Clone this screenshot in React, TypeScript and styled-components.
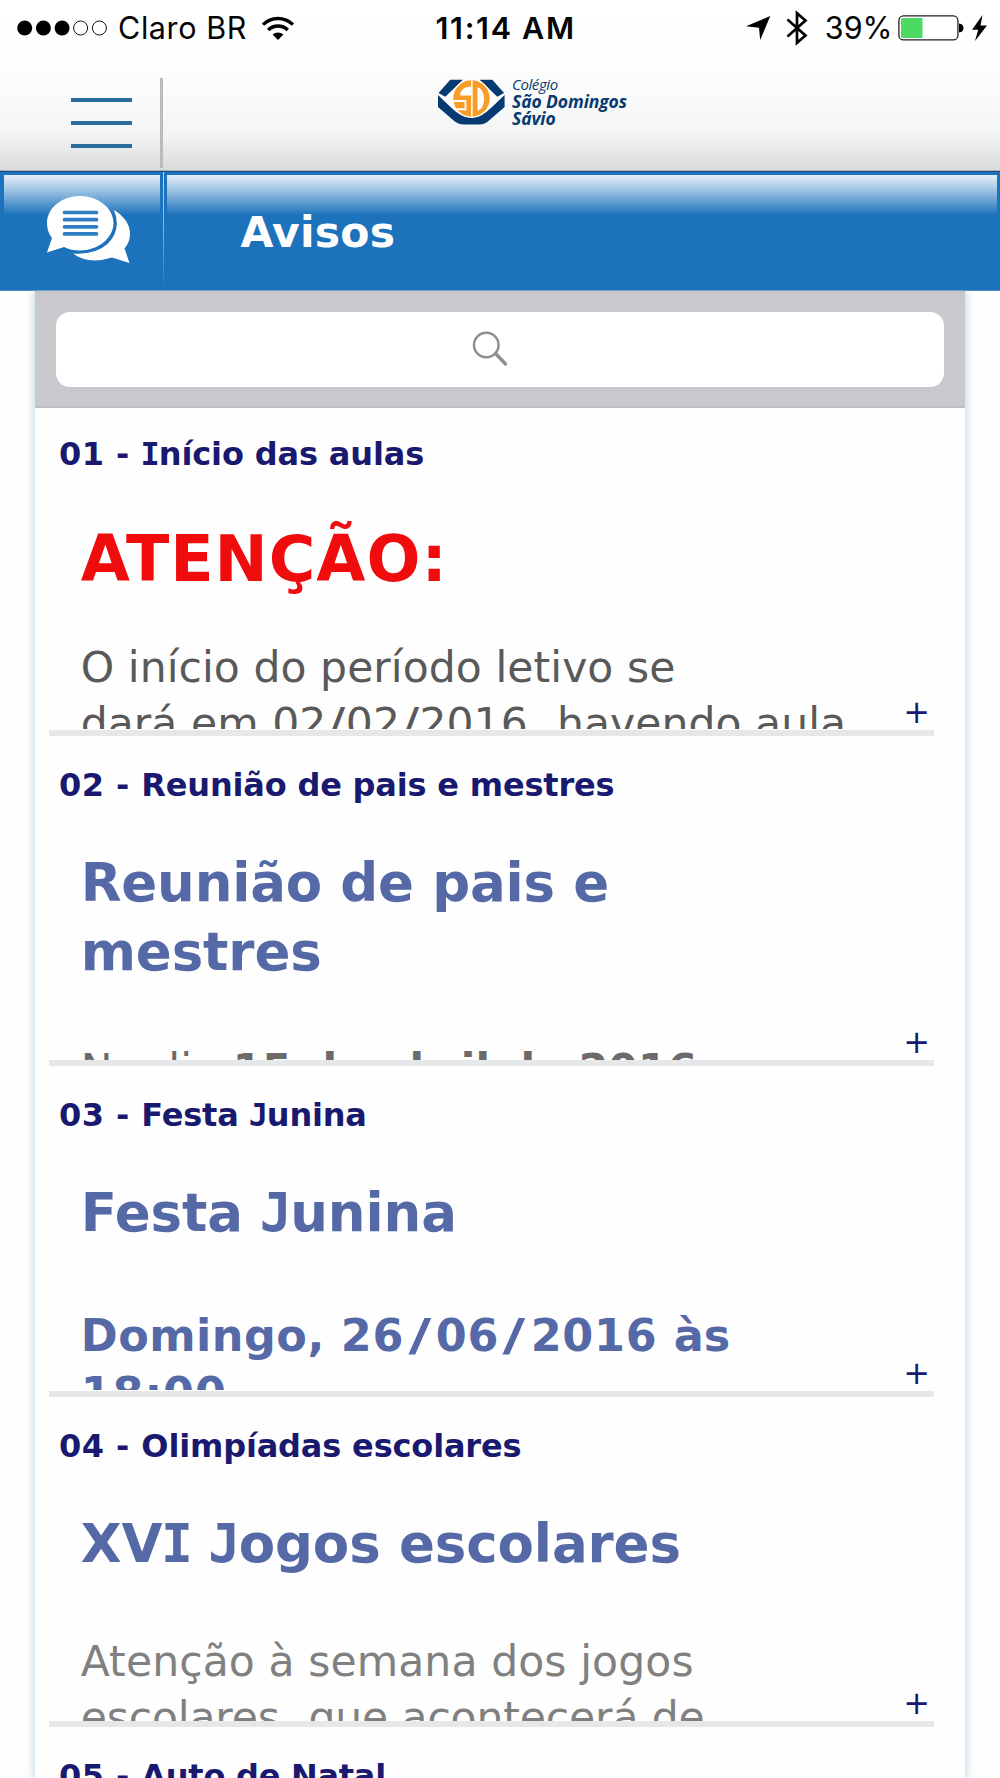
import React from "react";
import styled, { createGlobalStyle } from "styled-components";

const Global = createGlobalStyle`
  * { box-sizing: border-box; }
  html, body { margin: 0; padding: 0; background: #fefefe; }
  body { overflow: hidden; }
`;

const Screen = styled.div`
  width: 1000px;
  height: 1778px;
  overflow: hidden;
  display: flex;
  flex-direction: column;
  background: #fefefe;
  font-family: Verdana, "DejaVu Sans", sans-serif;
`;

const Top = styled.header`
  flex: none;
  height: 171px;
  display: flex;
  flex-direction: column;
  background: linear-gradient(#fff 0, #fefefe 62px, #f4f5f5 132px, #e6e7e7 152px, #d9dbdd 170px);
  border-bottom: 1px solid #a9b0b6;
`;

const StatusBar = styled.div`
  height: 56px;
  display: grid;
  grid-template-columns: 418.5px 1fr auto;
  align-items: center;
  padding: 0 13px 0 17px;
  font-family: Inter, sans-serif;
  font-size: 30.5px;
  line-height: 54px;
  color: #050505;
`;

const Cluster = styled.div`
  display: flex;
  align-items: center;
  height: 56px;
`;

const Label = styled.span<{ $track?: number; $weight?: number }>`
  letter-spacing: ${(p) => p.$track ?? 0}px;
  font-weight: ${(p) => p.$weight ?? 400};
  white-space: nowrap;
`;

const Carrier = styled(Label)`
  margin: 0 14px 0 10px;
`;

const BluetoothIcon = styled.svg`
  margin: 0 16.5px 0 15px;
`;

const BatteryIcon = styled.svg`
  margin: 0 8px 0 5.5px;
`;

const BrandRow = styled.div`
  flex: 1;
  display: flex;
  align-items: flex-start;
`;

const MenuCell = styled.div`
  width: 163px;
  height: 90px;
  margin-top: 22px;
  padding: 20px 0 0 71px;
  border-right: 3px solid #b9bbbc;
  display: flex;
  flex-direction: column;
  gap: 19px;
`;

const MenuLine = styled.span`
  width: 61px;
  height: 4px;
  background: #286d9e;
`;

const Brand = styled.div`
  display: flex;
  margin: 23px 0 0 274.5px;
`;

const BrandName = styled.div`
  padding-left: 7.5px;
  margin-top: -3.5px;
  font-family: "Open Sans", sans-serif;
  font-style: italic;
  font-weight: 700;
  font-size: 17.5px;
  line-height: 17px;
  letter-spacing: -0.1px;
  color: #073a70;
  white-space: nowrap;
`;

const BrandKind = styled.div`
  font-weight: 400;
  font-size: 15px;
  line-height: 17px;
  letter-spacing: -0.4px;
`;

const TitleBar = styled.div`
  flex: none;
  height: 119.5px;
  display: flex;
  gap: 3px;
  background: #1d73bb;
  border-top: 1px solid #1a4c80;
  border-bottom: 1px solid #4d90c8;
`;

const Gloss = styled.div<{ $w?: number }>`
  ${(p) => (p.$w ? `width: ${p.$w}px; flex: none;` : "flex: 1; margin-right: 3px;")}
  margin-top: 3px;
  height: 115px;
  background: linear-gradient(#e4eff8 0, #a9cae5 13px, #5a9ad0 28px, #1d73bb 40px);
  display: flex;
`;

const BarDivider = styled.span`
  width: 1px;
  flex: none;
  height: 117px;
  background: linear-gradient(#c4dcef 0, #6ea6d4 70px, #1d73bb 116px);
`;

const BarEdge = styled.span`
  width: 1px;
  flex: none;
`;

const ChatIcon = styled.svg`
  margin: 20px 0 0 42px;
`;

const PageTitle = styled.h1`
  margin: 0 0 0 73.5px;
  padding-top: 29.5px;
  font-size: 42.5px;
  line-height: 56px;
  letter-spacing: 0.2px;
  font-weight: 700;
  color: #fff;
`;

const Panel = styled.main`
  width: 930px;
  margin: 0 auto;
  flex: 1;
  min-height: 0;
  background: #fefefe;
  box-shadow: 0 0 9px 1px #c3d6e3;
  clip-path: inset(0 -20px);
`;

const SearchBar = styled.div`
  height: 117.5px;
  padding: 21.5px 21px 19px;
  background: #c9c8cd;
  border-bottom: 2px solid #bfbebf;
`;

const SearchField = styled.div`
  height: 75px;
  border-radius: 14px;
  background: #fff;
  display: flex;
  padding: 19px 0 0 416px;
`;

const List = styled.div`
  margin-top: -2.8px;
`;

const Item = styled.article`
  width: 885px;
  height: 330.5px;
  margin-left: 14.3px;
  padding-top: 29px;
  border-bottom: 6.5px solid #e6e7e9;
  overflow: hidden;
`;

const ItemTitle = styled.h2<{ $track: number }>`
  margin: 0;
  padding-left: 9.7px;
  font-size: 32px;
  line-height: 40px;
  height: 40px;
  letter-spacing: ${(p) => p.$track}px;
  font-weight: 700;
  color: #191970;
  white-space: nowrap;
`;

const ItemNumber = styled.span`
  letter-spacing: 0.45px;
`;

const ItemBody = styled.div`
  height: 255px;
  display: flex;
  justify-content: space-between;
  align-items: flex-end;
`;

const Preview = styled.div`
  height: 255px;
  padding-left: 31.4px;
  overflow: hidden;
`;

const Line = styled.div<{ $size: number; $lh: number; $mt?: number; $color: string; $bold?: boolean; $track?: number }>`
  font-size: ${(p) => p.$size}px;
  line-height: ${(p) => p.$lh}px;
  height: ${(p) => p.$lh}px;
  margin-top: ${(p) => p.$mt ?? 0}px;
  color: ${(p) => p.$color};
  font-weight: ${(p) => (p.$bold ? 700 : 400)};
  letter-spacing: ${(p) => p.$track ?? 0}px;
  white-space: nowrap;
`;

/* Widens the side bearings of narrow glyphs, in em. */
const Wide = styled.span<{ $l: number; $r: number; $stretch?: number }>`
  margin-left: ${(p) => p.$l}em;
  margin-right: ${(p) => p.$r}em;
  ${(p) => (p.$stretch ? `display: inline-block; line-height: 1; transform: scaleX(${p.$stretch});` : "")}
`;

/* Capitals I and J with slab serifs. */
const Slab = styled.span`
  font-family: "DejaVu Sans Mono", monospace;
  line-height: 1;
  margin: 0 -0.027em;
`;

const Track = styled.span<{ $by: number }>`
  letter-spacing: ${(p) => p.$by}px;
`;

const Expand = styled.span`
  flex: none;
  width: 31px;
  font-size: 32px;
  line-height: 40px;
  margin-bottom: -2.4px;
  color: #191970;
`;

const spaced = (text: string, bold = true) =>
  text.split(/([JI/,])/).map((part, i) => {
    if (part === "/") {
      const side = bold ? 0.162 : 0.0585;
      return <Wide key={i} $l={side} $r={side} $stretch={bold ? 1.4 : 1.25}>/</Wide>;
    }
    if (part === "," && !bold) return <Wide key={i} $l={0} $r={0.046}>,</Wide>;
    if (bold && (part === "I" || part === "J")) return <Slab key={i}>{part}</Slab>;
    return part;
  });

type TextLine = { text: React.ReactNode; size: number; lh: number; mt?: number; color: string; bold?: boolean; track?: number };
type Notice = { number: string; title: string; track: number; lines: TextLine[] };

const BLUE = "#5669a7";

const notices: Notice[] = [
  {
    number: "01",
    title: "Início das aulas",
    track: -0.14,
    lines: [
      { text: "ATENÇÃO:", size: 63.5, lh: 78, mt: 46, color: "#f00c0c", bold: true, track: 1 },
      { text: "O início do período letivo se", size: 42.5, lh: 56, mt: 41.6, color: "#595959", track: 0.06 },
      { text: spaced("dará em 02/02/2016, havendo aula", false), size: 42.5, lh: 56, color: "#595959", track: 0.06 },
    ],
  },
  {
    number: "02",
    title: "Reunião de pais e mestres",
    track: -0.19,
    lines: [
      { text: "Reunião de pais e", size: 53, lh: 69, mt: 43.2, color: BLUE, bold: true, track: -0.17 },
      { text: "mestres", size: 53, lh: 69, color: BLUE, bold: true, track: -0.1 },
      { text: <><Track $by={0.35}>No dia </Track><b>15 de abril de 2016</b></>, size: 42.5, lh: 56, mt: 56.1, color: "#6b6b6b" },
    ],
  },
  {
    number: "03",
    title: "Festa Junina",
    track: -0.2,
    lines: [
      { text: spaced("Festa Junina"), size: 53, lh: 69, mt: 43, color: BLUE, bold: true, track: -0.1 },
      {
        text: <><Track $by={0.5}>Domingo, </Track><Track $by={0.77}>{spaced("26/06/2016 ")}</Track>às</>,
        size: 44.5, lh: 58.5, mt: 59.4, color: BLUE, bold: true,
      },
      { text: "18:00", size: 44.5, lh: 58.5, color: BLUE, bold: true, track: 0.9 },
    ],
  },
  {
    number: "04",
    title: "Olimpíadas escolares",
    track: -0.17,
    lines: [
      { text: spaced("XVI Jogos escolares"), size: 53, lh: 69, mt: 43.2, color: BLUE, bold: true, track: -0.1 },
      { text: "Atenção à semana dos jogos", size: 42.5, lh: 56, mt: 56.1, color: "#808080", track: 0.1 },
      { text: spaced("escolares, que acontecerá de", false), size: 42.5, lh: 56, color: "#808080", track: -0.14 },
    ],
  },
  { number: "05", title: "Auto de Natal", track: -0.26, lines: [] },
];

const App = () => (
  <>
    <Global />
    <Screen>
      <Top>
        <StatusBar>
          <Cluster>
            <svg width="91" height="16" viewBox="0 0 91 16">
              {[7.7, 26.4, 45.1].map((x) => <circle key={x} cx={x} cy="8" r="7.5" fill="#000" />)}
              {[63.6, 82.4].map((x) => <circle key={x} cx={x} cy="8" r="7" fill="none" stroke="#111" />)}
            </svg>
            <Carrier $track={0.6}>Claro BR</Carrier>
            <svg width="34" height="26" viewBox="0 0 34 26">
              <path d="M2 9.6a21.5 21.5 0 0 1 30 0M7.2 15a14 14 0 0 1 19.6 0" fill="none" stroke="#000" strokeWidth="3.4" />
              <path d="M17 25l-5.4-5.4a7.8 7.8 0 0 1 10.8 0z" />
            </svg>
          </Cluster>
          <Label $weight={560} $track={1.7}>11:14 AM</Label>
          <Cluster>
            <svg width="25" height="24" viewBox="0 0 25 24"><path d="M24.3 0L14.2 24L13 11.700L0 10.300z" /></svg>
            <BluetoothIcon width="22" height="36" viewBox="0 0 22 36">
              <path d="M1.500 9.500L19.500 25.500L11 32.800V3.200L19.500 10.500L1.500 26.500" fill="none" stroke="#000" strokeWidth="2.700" />
            </BluetoothIcon>
            <Label>39%</Label>
            <BatteryIcon width="66" height="26" viewBox="0 0 66 26">
              <rect x="0.900" y="0.900" width="59" height="24" rx="4.500" fill="#fff" stroke="#222" strokeWidth="1.300" />
              <path d="M5 3h19.500v20H5a2 2 0 0 1-2-2V5a2 2 0 0 1 2-2z" fill="#4cd964" />
              <path d="M61 8.500q4.500 .5 4.500 4.500t-4.500 4.500z" />
            </BatteryIcon>
            <svg width="15" height="26" viewBox="0 0 15 26"><path d="M10.500 0L0 14.800h6.200L3 26 15 10.600H8.500z" /></svg>
          </Cluster>
        </StatusBar>
        <BrandRow>
          <MenuCell><MenuLine /><MenuLine /><MenuLine /></MenuCell>
          <Brand>
            <svg width="67" height="47" viewBox="0 0 67 47">
              <path d="M1 16L24 1H43L66 16L45 39H22z" fill="#fff" />
              <path d="M12.300 .7H25L7.300 17.700L.5 14zM54.300 .7H41.600L59.300 17.700L66.100 14z" fill="#073a70" />
              <path d="M0 16L12.500 28Q23 38.500 33.300 38.500T54 28L66.600 16V28L51 41.500Q47 45.500 41 45.500H26Q20 45.500 15.600 41.500L0 28z" fill="#073a70" />
              <circle cx="33.500" cy="19.500" r="18.800" fill="#f89c27" stroke="#fff" strokeWidth="1.200" />
              <path d="M33.900 1V38.500" stroke="#fff" strokeWidth="1.500" />
              <path d="M33 7.500Q22.500 8 22 16.500H33zM39.500 8Q46 10.500 46 20T39.500 32z" fill="#fff" />
              <path d="M14.500 22H27.500V30.500L19 30" stroke="#fff" strokeWidth="1.800" fill="none" />
            </svg>
            <BrandName><BrandKind>Colégio</BrandKind>São Domingos<br />Sávio</BrandName>
          </Brand>
        </BrandRow>
      </Top>
      <TitleBar>
        <BarEdge />
        <Gloss $w={156}>
          <ChatIcon width="84" height="69" viewBox="0 0 84 69">
            <path d="M34 1C52 1 67.500 13 67.500 28S52 55.500 34 55.500Q25 55.500 18 52L1 57.500 6 43Q1 37 1 28C1 13 16 1 34 1z" fill="#fff" />
            <path d="M68 15Q84 25 84 39 84 47 78.500 53.500L83.500 68 66 62.500Q42 70 27 58.500 49 60 61.500 49 76 35 68 15z" fill="#fff" />
            <path d="M18.500 17.500H50.500M18.500 24.700H50.500M18.500 31.800H50.500M18.500 38.900H50.500" stroke="#2d7dc0" strokeWidth="3.700" strokeLinecap="round" />
          </ChatIcon>
        </Gloss>
        <BarDivider />
        <Gloss><PageTitle>Avisos</PageTitle></Gloss>
      </TitleBar>
      <Panel>
        <SearchBar>
          <SearchField>
            <svg width="36" height="36" viewBox="0 0 36 36" fill="none" stroke="#8e8e93">
              <circle cx="14.300" cy="14" r="12.300" strokeWidth="2.500" />
              <path d="M23.500 22.500L33.500 33" strokeWidth="3.400" strokeLinecap="round" />
            </svg>
          </SearchField>
        </SearchBar>
        <List>
          {notices.map((n) => (
            <Item key={n.number}>
              <ItemTitle $track={n.track}><ItemNumber>{n.number} - </ItemNumber>{spaced(n.title)}</ItemTitle>
              <ItemBody>
                <Preview>
                  {n.lines.map((l, i) => (
                    <Line key={i} $size={l.size} $lh={l.lh} $mt={l.mt} $color={l.color} $bold={l.bold} $track={l.track}>
                      {l.text}
                    </Line>
                  ))}
                </Preview>
                <Expand>+</Expand>
              </ItemBody>
            </Item>
          ))}
        </List>
      </Panel>
    </Screen>
  </>
);

export default App;
